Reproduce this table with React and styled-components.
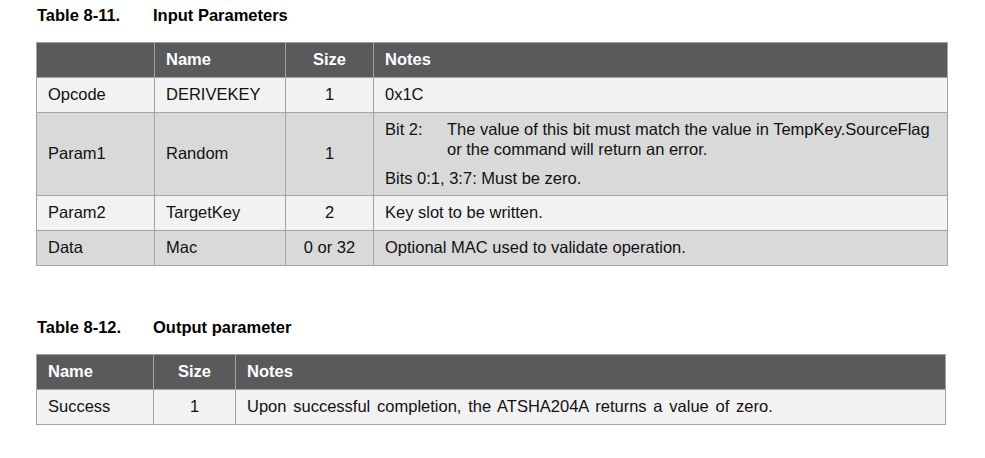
import React from "react";
import styled, { createGlobalStyle } from "styled-components";

const Global = createGlobalStyle`
  html, body { margin: 0; padding: 0; background: #ffffff; }
  body { font-family: "Liberation Sans", Arial, sans-serif; color: #111111; }
`;

const Page = styled.div`
  padding: 5px 0 0 36px;
  display: flex;
  flex-direction: column;
`;

const Section = styled.section`
  display: flex;
  flex-direction: column;
  gap: 17px;
  margin-bottom: ${(p) => p.$after || 0}px;
`;

const Caption = styled.div`
  display: flex;
  font-weight: bold;
  font-size: 16.5px;
  line-height: 20px;
  color: #000;
`;

const CaptionNum = styled.span`
  width: 116px;
  padding-left: 1px;
`;

const Table = styled.table`
  border-collapse: collapse;
  table-layout: fixed;
  width: ${(p) => p.$width}px;
  font-size: 16.5px;
  line-height: 20px;
`;

const HeadRow = styled.tr`
  height: 35px;
  background: #5a5a5c;
`;

const Row = styled.tr`
  height: 35px;
  background: ${(p) => (p.$shade ? "#d9d9d9" : "#f2f2f2")};
`;

const Th = styled.th`
  border: 1px solid #a3a3a3;
  padding: 0 11px 2px;
  color: #ffffff;
  font-weight: bold;
  text-align: ${(p) => (p.$center ? "center" : "left")};
  vertical-align: middle;
`;

const Td = styled.td`
  border: 1px solid #a3a3a3;
  padding: 0 11px 2px;
  color: #111111;
  text-align: ${(p) => (p.$center ? "center" : "left")};
  vertical-align: middle;
  word-spacing: ${(p) => p.$spread || 0}px;
`;

const NotesTd = styled(Td)`
  padding: 7px 11px 6.5px;
  line-height: 19.5px;
`;

const BitLine = styled.div`
  display: grid;
  grid-template-columns: 62px 1fr;
  margin-bottom: 10px;
`;

const inputRows = [
  { a: "Opcode", b: "DERIVEKEY", c: "1", d: "0x1C" },
  { a: "Param1", b: "Random", c: "1", bits: true },
  { a: "Param2", b: "TargetKey", c: "2", d: "Key slot to be written." },
  { a: "Data", b: "Mac", c: "0 or 32", d: "Optional MAC used to validate operation." },
];

export default function App() {
  return (
    <>
      <Global />
      <Page>
        <Section $after={51}>
          <Caption>
            <CaptionNum>Table 8-11.</CaptionNum>
            <span>Input Parameters</span>
          </Caption>
          <Table $width={912}>
            <colgroup>
              <col style={{ width: 118 }} />
              <col style={{ width: 131 }} />
              <col style={{ width: 88 }} />
              <col />
            </colgroup>
            <thead>
              <HeadRow>
                <Th></Th>
                <Th>Name</Th>
                <Th $center>Size</Th>
                <Th>Notes</Th>
              </HeadRow>
            </thead>
            <tbody>
              {inputRows.map((r, i) => (
                <Row key={r.a} $shade={i % 2 === 1}>
                  <Td>{r.a}</Td>
                  <Td>{r.b}</Td>
                  <Td $center>{r.c}</Td>
                  {r.bits ? (
                    <NotesTd>
                      <BitLine>
                        <span>Bit 2:</span>
                        <span>
                          The value of this bit must match the value in TempKey.SourceFlag or
                          the command will return an error.
                        </span>
                      </BitLine>
                      <div>Bits 0:1, 3:7: Must be zero.</div>
                    </NotesTd>
                  ) : (
                    <Td>{r.d}</Td>
                  )}
                </Row>
              ))}
            </tbody>
          </Table>
        </Section>
        <Section>
          <Caption>
            <CaptionNum>Table 8-12.</CaptionNum>
            <span>Output parameter</span>
          </Caption>
          <Table $width={910}>
            <colgroup>
              <col style={{ width: 117 }} />
              <col style={{ width: 82 }} />
              <col />
            </colgroup>
            <thead>
              <HeadRow>
                <Th>Name</Th>
                <Th $center>Size</Th>
                <Th>Notes</Th>
              </HeadRow>
            </thead>
            <tbody>
              <Row>
                <Td>Success</Td>
                <Td $center>1</Td>
                <Td $spread={2.2}>
                  Upon successful completion, the ATSHA204A returns a value of zero.
                </Td>
              </Row>
            </tbody>
          </Table>
        </Section>
      </Page>
    </>
  );
}
